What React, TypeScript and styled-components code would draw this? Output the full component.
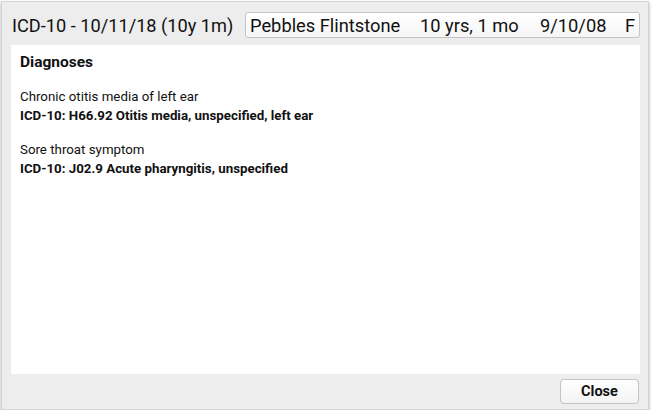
import React from "react";
import styled, { createGlobalStyle } from "styled-components";

const Global = createGlobalStyle`
  html, body { margin: 0; padding: 0; background: #ffffff; }
  body { font-family: Roboto, "Liberation Sans", Arial, sans-serif; color: #111; }
`;

const Page = styled.div`
  padding: 1px 0 0 1px;
`;

const Window = styled.div`
  width: 648px;
  height: 409px;
  box-sizing: border-box;
  background: #ededed;
  border: 1px solid #d4d4d4;
  box-shadow: 0 2px 3px rgba(0, 0, 0, 0.35);
  display: flex;
  flex-direction: column;
  padding: 10px 8px 5px 9px;
`;

const TitleRow = styled.div`
  display: flex;
  align-items: center;
  height: 26px;
`;

const Title = styled.div`
  font-size: 18.2px;
  color: #111;
  white-space: nowrap;
  padding-left: 1px;
  flex: 1;
`;

const PatientBox = styled.div`
  width: 395px;
  height: 26px;
  box-sizing: border-box;
  border: 1px solid #c4c4c4;
  border-radius: 3px;
  background: linear-gradient(#ffffff, #f6f6f6);
  display: flex;
  align-items: center;
  padding: 0 4px 0 4px;
  font-size: 18.3px;
  color: #111;
`;

const Field = styled.span<{ $w?: number; $right?: boolean }>`
  width: ${(p) => (p.$w ? `${p.$w}px` : "auto")};
  flex: ${(p) => (p.$w ? "none" : "1")};
  text-align: ${(p) => (p.$right ? "right" : "left")};
  white-space: nowrap;
`;

const Panel = styled.div`
  margin-top: 7px;
  flex: 1;
  background: #ffffff;
  padding: 8px 9px;
`;

const Heading = styled.div`
  font-size: 15.5px;
  font-weight: 700;
  margin-bottom: 16px;
`;

const Diagnosis = styled.div`
  font-size: 13.3px;
  line-height: 19px;
  margin-bottom: 15px;
`;

const Code = styled.div`
  font-weight: 700;
`;

const Footer = styled.div`
  display: flex;
  justify-content: flex-end;
  padding-top: 5px;
`;

const Button = styled.button`
  width: 79px;
  height: 25px;
  box-sizing: border-box;
  border: 1px solid #c4c4c4;
  border-radius: 4px;
  background: linear-gradient(#ffffff, #f3f3f3);
  font-family: Roboto, "Liberation Sans", Arial, sans-serif;
  font-size: 14.5px;
  font-weight: 700;
  color: #111;
  margin-right: 1px;
`;

const diagnoses = [
  { name: "Chronic otitis media of left ear", code: "ICD-10: H66.92 Otitis media, unspecified, left ear" },
  { name: "Sore throat symptom", code: "ICD-10: J02.9 Acute pharyngitis, unspecified" },
];

export default function App() {
  return (
    <Page>
      <Global />
      <Window>
        <TitleRow>
          <Title>ICD-10 - 10/11/18 (10y 1m)</Title>
          <PatientBox>
            <Field $w={170}>Pebbles Flintstone</Field>
            <Field $w={120}>10 yrs, 1 mo</Field>
            <Field>9/10/08</Field>
            <Field $right>F</Field>
          </PatientBox>
        </TitleRow>
        <Panel>
          <Heading>Diagnoses</Heading>
          {diagnoses.map((d) => (
            <Diagnosis key={d.code}>
              <div>{d.name}</div>
              <Code>{d.code}</Code>
            </Diagnosis>
          ))}
        </Panel>
        <Footer>
          <Button>Close</Button>
        </Footer>
      </Window>
    </Page>
  );
}
